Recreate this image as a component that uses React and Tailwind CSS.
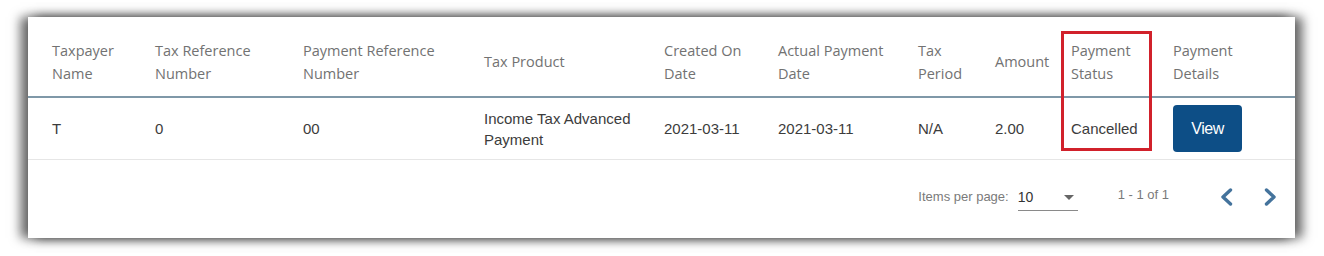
import React from 'react';

const COLUMNS = [
  { key: 'name', label: ['Taxpayer', 'Name'] },
  { key: 'taxRef', label: ['Tax Reference', 'Number'] },
  { key: 'payRef', label: ['Payment Reference', 'Number'] },
  { key: 'product', label: ['Tax Product'] },
  { key: 'created', label: ['Created On', 'Date'] },
  { key: 'actual', label: ['Actual Payment', 'Date'] },
  { key: 'period', label: ['Tax', 'Period'] },
  { key: 'amount', label: ['Amount'] },
  { key: 'status', label: ['Payment', 'Status'] },
  { key: 'details', label: ['Payment', 'Details'] },
];

const ROW = {
  name: 'T',
  taxRef: '0',
  payRef: '00',
  product: ['Income Tax Advanced', 'Payment'],
  created: '2021-03-11',
  actual: '2021-03-11',
  period: 'N/A',
  amount: '2.00',
  status: 'Cancelled',
};

const GRID = 'grid grid-cols-[103px_148px_181px_180px_114px_140px_77px_76px_102px_1fr]';

const Chevron = ({ dir }) => (
  <svg width="16" height="18" viewBox="0 0 16 18" fill="none">
    <path
      d={dir === 'left' ? 'M11.5 2 L4 9 L11.5 16' : 'M4.5 2 L12 9 L4.5 16'}
      stroke="#44739c"
      strokeWidth="3.4"
      strokeLinecap="round"
      strokeLinejoin="round"
    />
  </svg>
);

export default function App() {
  return (
    <div className="w-[1324px] h-[256px] bg-white overflow-hidden pt-[17px] pl-[28px]">
      <div className="relative w-[1267px] h-[221px] bg-white shadow-[-8px_0_10px_rgba(0,0,0,0.5),8px_0_10px_rgba(0,0,0,0.5),0_0_12px_rgba(0,0,0,0.28)]">
        {/* Header */}
        <div className={`${GRID} pl-[24px] h-[81px] pt-[10px] items-center border-b-2 border-[#7f98a8] text-[14.5px] leading-[23px] text-[#727272] font-['Open_Sans',sans-serif]`}>
          {COLUMNS.map(col => (
            <div key={col.key}>
              {col.label.map(l => <div key={l}>{l}</div>)}
            </div>
          ))}
        </div>

        {/* Row */}
        <div className={`${GRID} pl-[24px] h-[62px] items-center border-b border-[#e6e6e6] text-[15px] leading-[21px] text-[#3c3c3c] font-['Liberation_Sans',Arial,sans-serif]`}>
          <div>{ROW.name}</div>
          <div>{ROW.taxRef}</div>
          <div>{ROW.payRef}</div>
          <div>{ROW.product.map(l => <div key={l}>{l}</div>)}</div>
          <div>{ROW.created}</div>
          <div>{ROW.actual}</div>
          <div>{ROW.period}</div>
          <div>{ROW.amount}</div>
          <div>{ROW.status}</div>
          <div>
            <button className="w-[69px] h-[47px] rounded-[4px] bg-[#0d4e86] text-white text-[16px] tracking-[-0.5px]">View</button>
          </div>
        </div>

        {/* Pagination */}
        <div className="flex items-center justify-end h-[76px] pr-[17px] pb-[2px] text-[13px] text-[#7a7a7a] font-['Liberation_Sans',Arial,sans-serif]">
          <span className="mr-[9px]">Items per page:</span>
          <div className="flex items-center justify-between w-[60px] h-[26px] border-b border-[#8a8a8a] text-[14px] text-[#333] mt-[1px]">
            <span>10</span>
            <span className="mr-[4px] w-0 h-0 border-l-[5px] border-r-[5px] border-t-[5px] border-l-transparent border-r-transparent border-t-[#666]" />
          </div>
          <span className="ml-[40px] mr-[50px] -mt-[4px]">1 - 1 of 1</span>
          <div className="flex items-center gap-[27px]">
            <Chevron dir="left" />
            <Chevron dir="right" />
          </div>
        </div>

        {/* Annotation */}
        <div className="absolute left-[1033px] top-[14px] w-[91px] h-[120px] border-[3px] border-[#d1212b]" />
      </div>
    </div>
  );
}
